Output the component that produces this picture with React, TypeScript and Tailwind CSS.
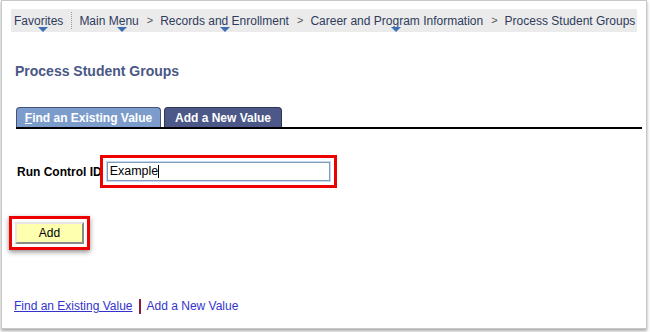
import React from 'react';

// label split as [before, anchor letter, after]; the caret sits under the anchor
const crumbs: { parts: [string, string, string] }[] = [
  { parts: ['Main M', 'e', 'nu'] },
  { parts: ['Records an', 'd', ' Enrollment'] },
  { parts: ['Career and Pro', 'g', 'ram Information'] },
  { parts: ['Process Student Groups', '', ''] },
];

function Crumb({ parts }: { parts: [string, string, string] }) {
  return (
    <span>
      {parts[0]}
      {parts[1] && (
        <span className="relative">
          {parts[1]}
          <span className="absolute top-[13px] left-1/2 -translate-x-1/2 w-0 h-0 border-l-[5px] border-r-[5px] border-t-[5px] border-l-transparent border-r-transparent border-t-[#3d6fb5]" />
        </span>
      )}
      {parts[2]}
    </span>
  );
}

export default function App() {
  return (
    <div className="w-[650px] h-[332px] bg-white overflow-hidden">
      <div
        className="w-[646px] h-[329px] ml-[1px] border border-[#c8c8c8] shadow-[0_2px_3px_rgba(0,0,0,0.35)] bg-white"
        style={{ fontFamily: 'Arial, "Liberation Sans", sans-serif' }}
      >
        {/* Breadcrumb bar */}
        <div className="mt-[8px] mx-[9px] h-[23px] bg-[#ebebeb] flex items-center whitespace-nowrap text-[12px] text-[#2f3b5c] leading-none">
          <span className="pl-[3px] pr-[8px]">
            <Crumb parts={['Favo', 'r', 'ites']} />
          </span>
          <span className="h-[17px] border-l border-dotted border-[#9a9a9a]" />
          <span className="pl-[7px]" />
          {crumbs.map((c, i) => (
            <React.Fragment key={i}>
              {i > 0 && <span className="pl-[8px] pr-[7px] text-[#555] text-[11px]">&gt;</span>}
              <Crumb parts={c.parts} />
            </React.Fragment>
          ))}
        </div>

        {/* Page title */}
        <h1 className="mt-[29px] ml-[13px] text-[14px] font-bold text-[#4a5886]">Process Student Groups</h1>

        {/* Tabs */}
        <div className="mt-[25px] ml-[14px] mr-[4px] flex items-end gap-[3px] border-b-2 border-black">
          <div className="w-[145px] h-[20px] bg-[#7c9dcb] border border-b-0 border-[#44517a] rounded-t-[4px] text-white text-[12px] font-bold flex items-center justify-center">
            <span><span className="underline">F</span>ind an Existing Value</span>
          </div>
          <div className="w-[118px] h-[20px] bg-[#4b5888] border border-b-0 border-[#2d3658] rounded-t-[4px] text-white text-[12px] font-bold flex items-center justify-center">
            Add a New Value
          </div>
        </div>

        {/* Run control */}
        <div className="mt-[26px] ml-[15px] flex items-center">
          <span className="text-[12px] font-bold text-black">Run Control ID</span>
          <div className="ml-[-2px] border-[3px] border-[#ee0000] px-[4px] py-[4px]">
            <div className="w-[223px] h-[19px] border border-[#7f9db9] shadow-[0_0_0_1px_#c6d7f0] flex items-center pl-[2px] text-[12.5px] text-black">
              Example<span className="w-px h-[13px] bg-black" />
            </div>
          </div>
        </div>

        {/* Add button */}
        <div className="mt-[28px] ml-[7px] w-[81px] h-[34px] border-[3px] border-[#ee0000] shadow-[0_2px_5px_rgba(0,0,0,0.45)] flex items-center justify-center">
          <button className="w-[69px] h-[22px] bg-[#ffffb0] border-2 border-t-[#e6e6e6] border-l-[#e6e6e6] border-r-[#8a8a8a] border-b-[#8a8a8a] text-[12px] text-black">
            Add
          </button>
        </div>

        {/* Bottom links */}
        <div className="mt-[47px] ml-[12px] flex items-center text-[12px]">
          <span className="text-[#3333cc] underline">Find an Existing Value</span>
          <span className="mx-[6px] w-[2px] h-[15px] bg-[#8b1a3a]" />
          <span className="text-[#3333cc]">Add a New Value</span>
        </div>
      </div>
    </div>
  );
}
